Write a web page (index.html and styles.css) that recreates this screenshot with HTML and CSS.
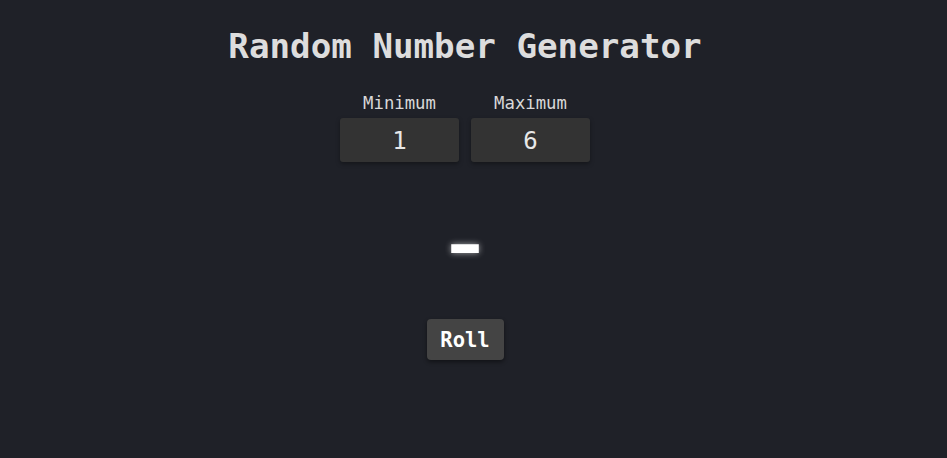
FILE: index.html
```html
<!DOCTYPE html>
<html lang="en">
<head>
<meta charset="utf-8">
<title>Random Number Generator</title>
<link rel="stylesheet" href="styles.css">
</head>
<body>
<main class="app">
  <h1 class="title">Random Number Generator</h1>
  <div class="range">
    <label class="field">
      <span class="field-label">Minimum</span>
      <input class="field-input" type="text" value="1">
    </label>
    <label class="field">
      <span class="field-label">Maximum</span>
      <input class="field-input" type="text" value="6">
    </label>
  </div>
  <div class="result">-</div>
  <button class="roll" type="button">Roll</button>
</main>
</body>
</html>
```
FILE: styles.css
```css
* { box-sizing: border-box; }
html, body { margin: 0; padding: 0; }
body {
  background: #1f2128;
  color: #dcdcdc;
  font-family: "DejaVu Sans Mono", "Liberation Mono", monospace;
  height: 458px;
}
.app {
  width: 930px;
  display: flex;
  flex-direction: column;
  align-items: center;
}
.title {
  margin: 26px 0 0;
  font-size: 34.2px;
  line-height: 40px;
  font-weight: bold;
  color: #dddddd;
}
.range {
  display: flex;
  gap: 12px;
  margin-top: 27px;
}
.field {
  display: flex;
  flex-direction: column;
  align-items: center;
}
.field-label {
  font-size: 17.3px;
  line-height: 21px;
  color: #d8d8d8;
  margin-bottom: 4px;
}
.field-input {
  width: 119px;
  height: 44px;
  padding-top: 2px;
  border: none;
  border-radius: 3px;
  background: #333333;
  color: #e8e8e8;
  font-family: "DejaVu Sans Mono", "Liberation Mono", monospace;
  font-size: 24px;
  text-align: center;
  box-shadow: 0 2px 4px rgba(0,0,0,0.35);
  outline: none;
}
.result {
  margin-top: 45px;
  height: 68px;
  font-size: 108px;
  line-height: 68px;
  font-weight: normal;
  color: #ffffff;
  text-shadow: 0 0 6px rgba(255,255,255,0.6);
}
.roll {
  margin-top: 44px;
  width: 77px;
  height: 41px;
  border: none;
  border-radius: 4px;
  background: #444444;
  color: #ffffff;
  font-family: "DejaVu Sans Mono", "Liberation Mono", monospace;
  font-size: 20.5px;
  font-weight: bold;
  box-shadow: 0 2px 4px rgba(0,0,0,0.45);
  cursor: pointer;
}
```
